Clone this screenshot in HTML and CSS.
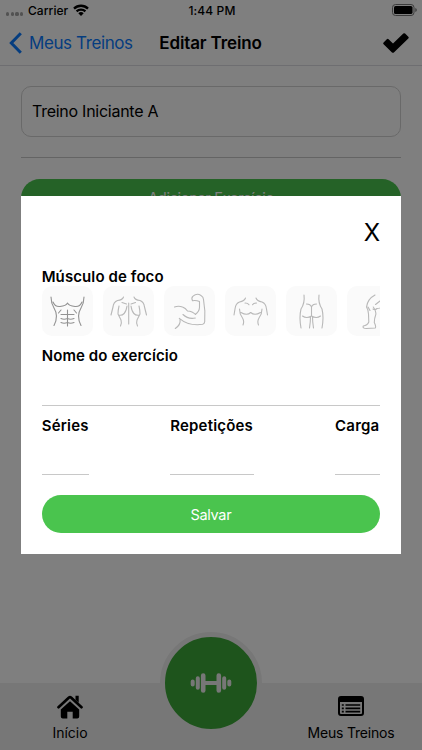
FILE: index.html
```html
<!DOCTYPE html>
<html lang="pt-BR">
<head>
<meta charset="utf-8">
<title>Editar Treino</title>
<link rel="stylesheet" href="styles.css">
</head>
<body>
<div class="app">
  <header class="header">
    <div class="status">
      <div class="carrier">
        <span class="dots"><i></i><i></i><i></i><i></i></span>
        <span class="carrier-name">Carrier</span>
        <svg class="wifi" width="16" height="12" viewBox="0 0 16 12"><g fill="none" stroke="#000" stroke-width="2.3"><path d="M1 4.6a10 10 0 0 1 14 0"/><path d="M3.6 7.4a6.2 6.2 0 0 1 8.8 0"/></g><path d="M5.3 9.2a3.9 3.9 0 0 1 5.4 0L8 12z"/></svg>
      </div>
      <span class="time">1:44 PM</span>
      <svg class="battery" width="26" height="12" viewBox="0 0 26 12"><rect x=".5" y=".5" width="21.5" height="11" rx="3" fill="none" stroke="#777"/><rect x="2" y="2" width="18.5" height="8" rx="1.6"/><path d="M23.3 4v4q1.5-.5 1.5-2t-1.5-2" fill="#777"/></svg>
    </div>
    <nav class="navbar">
      <a class="back"><svg width="13" height="22" viewBox="0 0 13 22"><path d="M11.8 1.3 2.3 11l9.5 9.7" fill="none" stroke="#0a7aff" stroke-width="3"/></svg><span class="back-text">Meus Treinos</span></a>
      <h1 class="title">Editar Treino</h1>
      <svg class="check" width="26" height="20" viewBox="0 0 26 20"><path d="M9 19.4.6 11.2q-.9-.9 0-1.800l3.200-3.200q.9-.9 1.800 0L10 10.500 20.300.6q.9-.9 1.800 0l3.200 3.100q.9.900 0 1.800L10.900 19.400q-.95.900-1.900 0z"/></svg>
    </nav>
  </header>
  <main class="content">
    <div class="name-input"><span>Treino Iniciante A</span></div>
    <hr class="rule">
    <div class="add-button"><span>Adicionar Exercício</span></div>
    <div class="exercise"></div>
    <div class="exercise"></div>
  </main>
  <footer class="tabs">
    <div class="tab tab-home">
      <svg width="26" height="25" viewBox="0 0 26 25"><path d="M1.5 13.2 12 3.5q1-.9 2 0l10.5 9.7" fill="none" stroke="#000" stroke-width="2.7" stroke-linecap="round" stroke-linejoin="round"/><path d="M18.5 1.8h3.2v7l-3.2-3zM13 7.2l9.2 8.4v6.9q0 2-2 2h-4.5v-6.8h-5.4v6.8H5.8q-2 0-2-2v-6.9z"/></svg>
      <span class="home-text">Início</span>
    </div>
    <div class="tab tab-list">
      <svg width="26" height="20" viewBox="0 0 26 20"><rect x="1" y="1" width="24" height="18" rx="2" fill="none" stroke="#000" stroke-width="2"/><path d="M1 1h24v5H1z"/><path d="M3.8 9h2m1.7 0h14.7M3.8 12.3h2m1.7 0h14.7M3.8 15.6h2m1.7 0h14.7" stroke="#000" stroke-width="1.7"/></svg>
      <span class="list-text">Meus Treinos</span>
    </div>
  </footer>
  <div class="fab">
    <svg width="42" height="20" viewBox="0 0 42 20"><g fill="none" stroke="#efefef" stroke-linecap="round"><path d="M14 10h14" stroke-width="4"/><path d="M13.2 2.6v14.8M28.8 2.6v14.8" stroke-width="4.6"/><path d="M7.8 5.3v9.4M34.2 5.3v9.4" stroke-width="4"/><path d="M2.7 8.5v3M39.3 8.5v3" stroke-width="4"/></g></svg>
  </div>
</div>
<div class="overlay">
  <section class="modal">
    <div class="close-row"><span class="close">X</span></div>
    <h2 class="label label-focus"><span>Músculo de foco</span></h2>
    <div class="muscles">
      <div class="muscle muscle-on"><svg viewBox="0 0 50 50"><path d="M9 11q0 6 3 11 5 8 0 17.500M42 11q0 6-3 11-5 8 0 17.500M11 16q2 5 7 4.500 6-.5 7.500-3.500 1.500 3 7.500 3.500 5 .5 7-4.500M19 24l-2.500 3M32 24l2.500 3M25.500 24v16M19 28.500h13M19 32.500q3 1.500 6.500 0 3 1.500 6.500 0M19 36.500q3 1.500 6.500 0 3 1.500 6.500 0"/></svg></div>
      <div class="muscle"><svg viewBox="0 0 50 50"><path d="M20.500 11q-1 3-6 3.500-4 1.500-4.500 6.500l-2 8M31 11q1 3 6 3.500 4 1.500 4.500 6.500l2 8M25.700 17v21M19 16.500l4.500 1.500M32.500 16.500l-4.500 1.500M16 20q-1 4-1 8l3 6q1 3-.5 6M36 20q1 4 1 8l-3 6q-1 3 .5 6M15.500 29q7 1.500 8.500-9M36.500 29q-7 1.500-8.500-9"/></svg></div>
      <div class="muscle"><svg viewBox="0 0 50 50"><path d="M10.500 21q4-1.500 8 0 3 1 5 4 5 .2 8 3.500M31.300 28.500q4-3 4.200-7M35.500 21.500v-6q-3.500-1.500-7-.8-1.500-3 .5-4.500 4-3.500 8-.7 2.500 1.500 2.500 4 2 11 1.200 22.300-.2 2-2 2.500-14 2-23.400-6M19 28.500q5 5 12.300 3.500M16 33.500q1 5-4.700 9"/></svg></div>
      <div class="muscle"><svg viewBox="0 0 50 50"><path d="M20.500 12q-1 3-6 4-4 1.500-4.500 7l-1 6M31 12q1 3 6 4 4 1.500 4.500 7l1 6M20 17q3 0 4 1.700M31.500 17q-3 0-4 1.700M14.500 23q0 5 3 9 2 3 .5 7M37 23q0 5-3 9-2 3-.5 7M16 26.500q6 3.500 9.700 0 4 3.500 9.700 0"/></svg></div>
      <div class="muscle"><svg viewBox="0 0 50 50"><path d="M18 9q1 8-3 14-2 8 0 19M33 9q-1 8 3 14 2 8 0 19M20.500 18q4 0 5 3 1-3 5-3M25.500 21v9M16.500 30q4 3 9 0 5 3 9 0M24.500 31q0 5-1 11M26.500 31q0 5 1 11"/></svg></div>
      <div class="muscle"><svg viewBox="0 0 50 50"><path d="M28 9q-7.500 4-8.500 12 2 3 2 7l.3 8q-1.500 3.500-5.500 4-1 2.500 3 2.500l9-.5q1-1.500-1-5.500 0-4 1.500-8 .5-4-2.500-7.500M21 21l2 3.500M26 23q2 1.500 4-.5 4 0 9-4M28.500 18.500l9-7"/></svg></div>
    </div>
    <h2 class="label label-name"><span>Nome do exercício</span></h2>
    <div class="line-input"></div>
    <div class="fields">
      <div class="field field-series"><span>Séries</span></div>
      <div class="field field-reps"><span>Repetições</span></div>
      <div class="field field-load"><span>Carga</span></div>
    </div>
    <div class="save"><span>Salvar</span></div>
  </section>
</div>
</body>
</html>
```
FILE: styles.css
```css
* { box-sizing: border-box; }
body { margin: 0; font-family: Inter, "Liberation Sans", sans-serif; color: #000; overflow: hidden; }
svg { display: block; flex: none; }
.app { position: relative; width: 422px; height: 750px; background: #fff; display: flex; flex-direction: column; }
.header { height: 66px; border-bottom: 1px solid #dcdce2; }
.status { height: 20px; display: grid; grid-template-columns: 1fr auto 1fr; align-items: center; padding: 0 4px 0 6px; font-size: 12px; font-weight: 500; }
.carrier { display: flex; align-items: center; }
.dots { display: flex; gap: 1.5px; width: 22px; padding-top: 8px; }
.dots i { width: 3.2px; height: 3.2px; border-radius: 50%; background: #a5a5a5; }
.carrier-name { width: 45px; letter-spacing: .05px; }
.time { letter-spacing: .1px; }
.battery { justify-self: end; }
.navbar { height: 45px; display: grid; grid-template-columns: 1fr auto 1fr; align-items: center; padding: 0 13px 0 9px; }
.back { display: flex; align-items: center; gap: 7px; color: #0a7aff; font-size: 17px; letter-spacing: -.4px; white-space: nowrap; }
.title { margin: 0 -2px 0 1px; font-size: 17px; font-weight: 600; letter-spacing: -.12px; }
.check { justify-self: end; }
.content { flex: 1; padding: 20px 21px 0; }
.name-input { height: 51px; border: 1px solid #d2d2d2; border-radius: 10px; padding: 0 10px 1px; display: flex; align-items: center; font-size: 16px; letter-spacing: -.26px; }
.rule { margin: 20px 0 21px; border: 0; border-top: 1px solid #c8c8c8; }
.add-button { height: 38px; border-radius: 19px; background: #4ac44e; color: #fff; display: flex; justify-content: center; align-items: center; padding-bottom: 2px; font-size: 14.5px; letter-spacing: -.3px; }
.exercise { height: 36px; margin-top: 26px; background: #ffe5d8; }
.tabs { height: 67px; background: #efefef; display: flex; justify-content: space-between; padding: 0 27px 0 30px; }
.tab { display: flex; flex-direction: column; align-items: center; font-size: 14px; line-height: 18px; }
.tab-home { width: 80px; padding-top: 11px; gap: 5px; }
.tab-list { width: 88px; padding-top: 13px; gap: 8px; white-space: nowrap; letter-spacing: -.2px; }
.fab { position: absolute; left: 160px; top: 632px; width: 102px; height: 102px; border-radius: 50%; border: 5px solid #efefef; background: #3ca838; display: flex; align-items: center; justify-content: center; }
.overlay { position: absolute; top: 0; left: 0; width: 422px; height: 750px; background: rgba(0,0,0,.5); padding: 196px 21.4px; }
.modal { height: 357.5px; background: #fff; padding: 20px 20.5px 0 20.3px; }
.close-row { display: flex; justify-content: flex-end; height: 47px; }
.close { font-size: 24px; line-height: 34px; }
.label { margin: 0; font-size: 15px; line-height: 27px; height: 27px; font-weight: 600; letter-spacing: .1px; }
.label-focus { height: 23px; }
.muscles { display: flex; gap: 10.1px; height: 51px; overflow: hidden; }
.muscle { flex: none; width: 51px; height: 50px; border-radius: 10px; background: #fafafa; }
.muscle svg { width: 50px; height: 50px; fill: none; stroke: #b8b8b8; stroke-width: 1.1; stroke-linecap: round; stroke-linejoin: round; }
.muscle-on svg { stroke: #929292; }
.label-name { padding-top: 5px; height: 33px; }
.line-input { height: 36px; border-bottom: 1px solid #c8c8c8; }
.fields { display: flex; justify-content: space-between; padding-top: 6px; font-size: 15px; font-weight: 600; line-height: 27px; letter-spacing: .2px; }
.field { height: 63px; border-bottom: 1px solid #c8c8c8; white-space: nowrap; }
.field-series { width: 47.5px; }
.field-reps { width: 84px; }
.field-load { width: 45px; }
.save { margin-top: 20px; height: 38px; border-radius: 19px; background: #4ac44e; color: #fff; display: flex; align-items: center; justify-content: center; font-size: 14.5px; letter-spacing: -.3px; }
```
